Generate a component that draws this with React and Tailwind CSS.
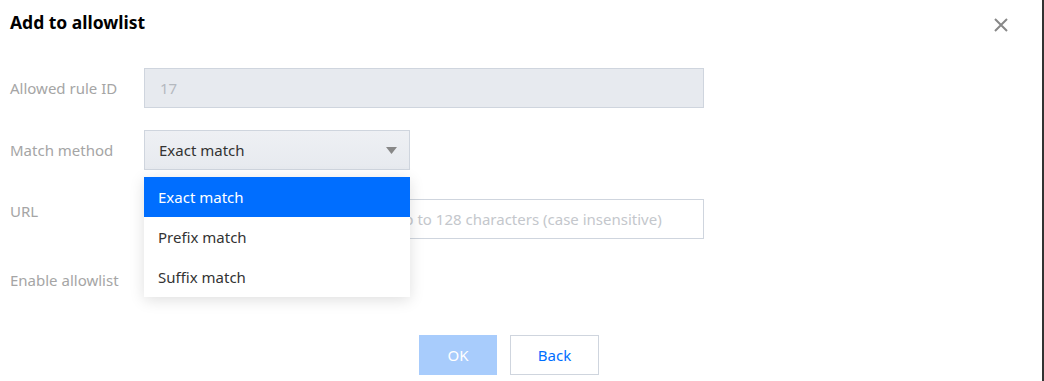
export default function App() {
  return (
    <div className="w-[1044px] h-[381px] bg-white flex overflow-hidden font-['Noto_Sans',sans-serif]">
      <div className="flex-1 flex flex-col">
        {/* header */}
        <div className="flex items-start justify-between pl-[10px] pr-[34px] pt-[10px]">
          <h2 className="text-[17.5px] leading-[25px] font-bold text-black">Add to allowlist</h2>
          <button className="mt-[8px]">
            <svg width="14" height="14" viewBox="0 0 14 14">
              <path d="M1 1 L13 13 M13 1 L1 13" stroke="#888" strokeWidth="2" />
            </svg>
          </button>
        </div>

        {/* form */}
        <div className="pl-[10px] mt-[33px] flex flex-col text-[15px]">
          <div className="flex items-center h-[40px]">
            <span className="w-[134px] text-[#a5a5a5]">Allowed rule ID</span>
            <div className="w-[560px] h-[40px] border border-[#cfd5de] bg-[#e7eaef] flex items-center px-[15px] text-[#b5b9bf]">
              17
            </div>
          </div>

          <div className="flex items-center h-[40px] mt-[22px] relative z-10">
            <span className="w-[134px] text-[#a5a5a5]">Match method</span>
            <div className="relative">
              <div className="w-[266px] h-[40px] border border-[#cfd5de] bg-gradient-to-b from-[#eef0f4] to-[#e7eaef] flex items-center justify-between pl-[14px] pr-[12px] text-[#333]">
                <span>Exact match</span>
                <svg width="11" height="7" viewBox="0 0 11 7">
                  <path d="M0 0 H11 L5.5 7 Z" fill="#888" />
                </svg>
              </div>
              <ul className="absolute left-0 top-[47px] w-[266px] bg-white shadow-[0_3px_14px_rgba(0,0,0,0.13)]">
                <li className="h-[40px] flex items-center pl-[14px] bg-[#006eff] text-white">Exact match</li>
                <li className="h-[40px] flex items-center pl-[14px] text-[#333]">Prefix match</li>
                <li className="h-[40px] flex items-center pl-[14px] text-[#333]">Suffix match</li>
              </ul>
            </div>
          </div>

          <div className="flex items-center h-[40px] mt-[29px]">
            <span className="w-[134px] text-[#a5a5a5] -mt-[16px]">URL</span>
            <div className="w-[560px] h-[40px] border border-[#cfd5de] bg-white flex items-center px-[15px] text-[#c4c7cc] whitespace-nowrap overflow-hidden">
              Starts with a slash / and contains up to 128 characters (case insensitive)
            </div>
          </div>

          <div className="flex items-center h-[24px] mt-[29px]">
            <span className="w-[134px] text-[#a5a5a5]">Enable allowlist</span>
          </div>
        </div>

        {/* footer */}
        <div className="flex justify-center gap-[13px] w-[1018px] mt-[43px] text-[15px]">
          <button className="w-[78px] h-[40px] bg-[#a8ccfc] text-white">OK</button>
          <button className="w-[89px] h-[40px] border border-[#cfd5de] bg-white text-[#006eff]">Back</button>
        </div>
      </div>
      <div className="w-[2px] h-full bg-[#333]"></div>
    </div>
  );
}
